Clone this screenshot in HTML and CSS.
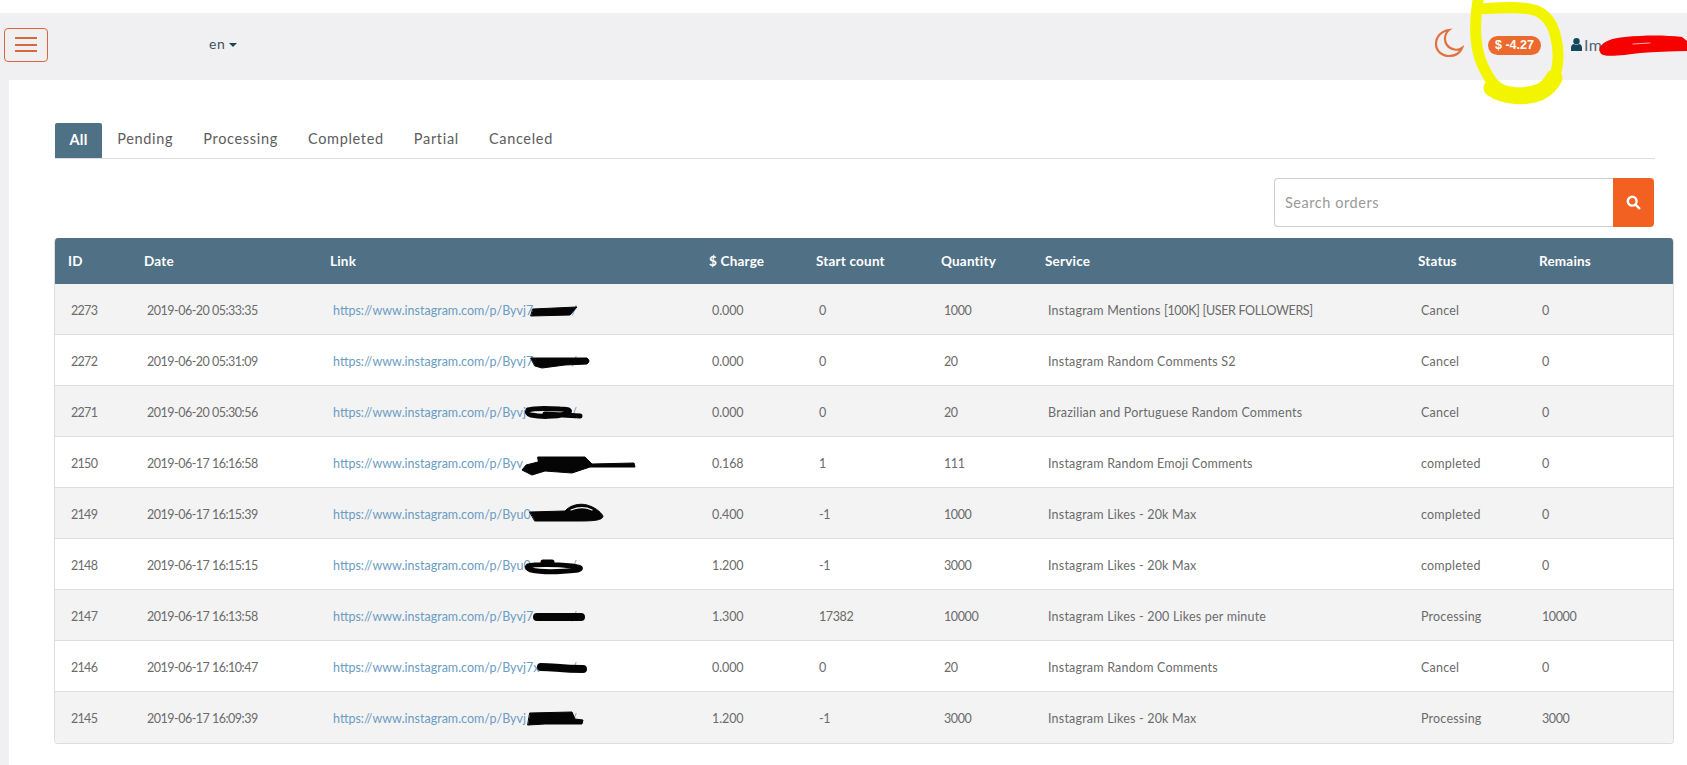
FILE: index.html
```html
<!DOCTYPE html>
<html>
<head>
  <title>Orders</title>
  <link rel="stylesheet" href="styles.css">
</head>
<body>
  <header class="topbar">
    <button class="menu-btn"><span></span><span></span><span></span></button>
    <div class="lang">en<i class="caret"></i></div>
    <div class="top-right">
      <svg class="moon" width="30" height="30" viewBox="0 0 30 30">
        <path d="M15 2 C7 3 2 9 2 16 C2 23 8 28 15 28 C21 28 26 25 28 20 C26 21.5 23 22 20.5 21.5 C14 20.5 10.5 15 11 10 C11.3 6.5 12.5 4 15 2 Z"></path>
      </svg>
      <span class="balance">$ -4.27</span>
      <div class="user">
        <svg width="11" height="13" viewBox="0 0 11 13">
          <circle cx="5.5" cy="3.3" r="3.2"></circle>
          <path d="M0 13 V9.5 C0 7.5 1.5 6.2 3 6 C4.5 7.2 6.5 7.2 8 6 C9.5 6.2 11 7.5 11 9.5 V13 Z"></path>
        </svg>
        <span>Im</span>
      </div>
    </div>
  </header>

  <main class="content">
    <ul class="tabs">
      <li class="active">All</li>
      <li>Pending</li>
      <li>Processing</li>
      <li>Completed</li>
      <li>Partial</li>
      <li>Canceled</li>
    </ul>

    <div class="search">
      <input type="text" placeholder="Search orders">
      <button>
        <svg width="15" height="15" viewBox="0 0 15 15">
          <circle cx="6.2" cy="6.2" r="4.4"></circle>
          <path d="M9.6 9.6 L13.3 13.3"></path>
        </svg>
      </button>
    </div>

    <div class="orders">
      <table>
        <colgroup>
          <col class="c-id"><col class="c-date"><col class="c-link"><col class="c-charge"><col class="c-start"><col class="c-qty"><col class="c-service"><col class="c-status"><col class="c-remains">
        </colgroup>
        <thead>
          <tr><th>ID</th><th>Date</th><th>Link</th><th>$ Charge</th><th>Start count</th><th>Quantity</th><th>Service</th><th>Status</th><th>Remains</th></tr>
        </thead>
        <tbody>
          <tr><td>2273</td><td>2019-06-20 05:33:35</td><td><a href="#"><span>https://www.instagram.com/p/Byvj7</span><span>/</span></a></td><td>0.000</td><td>0</td><td>1000</td><td>Instagram Mentions <span class="caps">[100K] [USER FOLLOWERS]</span></td><td>Cancel</td><td>0</td></tr>
          <tr><td>2272</td><td>2019-06-20 05:31:09</td><td><a href="#"><span>https://www.instagram.com/p/Byvj7</span><span>/</span></a></td><td>0.000</td><td>0</td><td>20</td><td>Instagram Random Comments S2</td><td>Cancel</td><td>0</td></tr>
          <tr><td>2271</td><td>2019-06-20 05:30:56</td><td><a href="#"><span>https://www.instagram.com/p/Byvj</span><span>/</span></a></td><td>0.000</td><td>0</td><td>20</td><td>Brazilian and Portuguese Random Comments</td><td>Cancel</td><td>0</td></tr>
          <tr><td>2150</td><td>2019-06-17 16:16:58</td><td><a href="#"><span>https://www.instagram.com/p/Byv</span><span>/</span></a></td><td>0.168</td><td>1</td><td>111</td><td>Instagram Random Emoji Comments</td><td>completed</td><td>0</td></tr>
          <tr><td>2149</td><td>2019-06-17 16:15:39</td><td><a href="#"><span>https://www.instagram.com/p/Byu0</span><span>/</span></a></td><td>0.400</td><td>-1</td><td>1000</td><td>Instagram Likes - 20k Max</td><td>completed</td><td>0</td></tr>
          <tr><td>2148</td><td>2019-06-17 16:15:15</td><td><a href="#"><span>https://www.instagram.com/p/Byu0</span><span>/</span></a></td><td>1.200</td><td>-1</td><td>3000</td><td>Instagram Likes - 20k Max</td><td>completed</td><td>0</td></tr>
          <tr><td>2147</td><td>2019-06-17 16:13:58</td><td><a href="#"><span>https://www.instagram.com/p/Byvj7</span><span>/</span></a></td><td>1.300</td><td>17382</td><td>10000</td><td>Instagram Likes - 200 Likes per minute</td><td>Processing</td><td>10000</td></tr>
          <tr><td>2146</td><td>2019-06-17 16:10:47</td><td><a href="#"><span>https://www.instagram.com/p/Byvj7x</span><span>/</span></a></td><td>0.000</td><td>0</td><td>20</td><td>Instagram Random Comments</td><td>Cancel</td><td>0</td></tr>
          <tr><td>2145</td><td>2019-06-17 16:09:39</td><td><a href="#"><span>https://www.instagram.com/p/Byvj</span><span>/</span></a></td><td>1.200</td><td>-1</td><td>3000</td><td>Instagram Likes - 20k Max</td><td>Processing</td><td>3000</td></tr>
        </tbody>
      </table>
    </div>
  </main>

  <!-- marker scribbles drawn over the screenshot -->
  <svg class="scribbles" width="1687" height="765" viewBox="0 0 1687 765">
    <path class="yellow" d="M1478 0 C1476 12 1475 25 1476 38 C1477 52 1481 64 1487 74 C1494 88 1505 94 1518 94 C1532 94 1548 88 1554 78 C1559 66 1559 50 1556 38 C1553 24 1547 14 1534 10 C1520 6 1498 8 1480 9"></path>
    <path class="yellow thick" d="M1492 88 C1505 97 1525 98 1540 92 C1548 88 1551 84 1554 78"></path>
    <path class="red" d="M1600 47 C1604 41 1612 38 1625 37 C1645 35 1665 35 1682 37 L1687 41 V51 C1670 51 1655 52 1640 53 C1625 55 1610 57 1603 55 C1599 53 1599 49 1600 47 Z"></path>
    <path class="red-gap" d="M1633 44 L1650 43"></path>

    <path class="ink fill" d="M533 309 L577 307 L570 315 L531 316 Z"></path>
    <path class="ink fill" d="M531 358 L560 358 L587 358 Q591 361 587 364 L565 365 L542 368 L535 366 Z"></path>
    <path class="ink w5" d="M528 410 C534 408 545 408 560 409 C570 409 572 411 566 414 C555 417 540 417 531 415 C527 414 527 412 528 410 M545 414 L580 416"></path>
    <path class="ink fill" d="M538 457 L585 457 L592 464 L634 463 L635 467 L590 467 L572 473 L545 471 L532 475 L522 470 L526 465 L538 462 Z"></path>
    <path class="ink fill" d="M530 512 L565 511 C570 505 580 503 587 505 C594 507 600 511 603 516 C603 520 595 521 580 521 L535 521 Z"></path>
    <path class="sliver" d="M571 510 C578 507 586 507 592 510"></path>
    <path class="ink w5" d="M528 566 C535 564 555 564 572 566 C580 567 583 568 578 570 C560 572 540 572 531 570 C527 569 527 567 528 566 Z M543 562 L552 562"></path>
    <path class="ink w7" d="M537 617 L581 617"></path>
    <path class="ink w7" d="M541 667 C555 667 560 669 583 669"></path>
    <path class="ink fill" d="M530 713 L572 712 L575 719 L583 720 L582 724 L545 724 L528 725 Z"></path>
  </svg>
</body>
</html>
```

FILE: styles.css
```css
body {
    margin: 0;
    padding-top: 13px;
    background-color: #f0f0f3;
    background-image: linear-gradient(#fff, #fff);
    background-size: 100% 13px;
    background-repeat: no-repeat;
    font-family: Lato, "Open Sans", sans-serif;
    color: #6b6b6b;
    overflow: hidden;
}
.topbar {
    display: flex;
    align-items: center;
    height: 67px;
    padding-left: 4px;
}
.menu-btn {
    display: flex;
    flex-direction: column;
    justify-content: center;
    gap: 4.5px;
    width: 44px;
    height: 34px;
    padding: 0 10px;
    margin-top: -4px;
    background: none;
    border: 1px solid #d8683c;
    border-radius: 4px;
}
.menu-btn span {
    display: block;
    height: 2px;
    background-color: #d8683c;
}
.lang {
    margin-left: 161px;
    margin-top: -7px;
    font-size: 14px;
    letter-spacing: 0.5px;
    color: #3d5561;
}
.caret {
    display: inline-block;
    margin-left: 4px;
    vertical-align: 2px;
    border-left: 4px solid transparent;
    border-right: 4px solid transparent;
    border-top: 4px solid #1f4354;
}
.top-right {
    display: flex;
    align-items: center;
    margin-left: auto;
    margin-top: -5px;
}
.moon {
    margin-top: -2px;
    fill: none;
    stroke: #e2703f;
    stroke-width: 2.2;
}
.balance {
    margin-left: 24px;
    margin-top: 2px;
    width: 53px;
    height: 19px;
    line-height: 19px;
    text-align: center;
    border-radius: 10px;
    background-color: #ed6a2e;
    color: #fff;
    font-family: "Liberation Sans", sans-serif;
    font-size: 12.5px;
    font-weight: bold;
}
.user {
    display: flex;
    align-items: center;
    gap: 2px;
    width: 116px;
    margin-left: 30px;
    font-size: 16px;
    letter-spacing: 0.4px;
    color: #4b6674;
}
.user svg {
    fill: #12485c;
}
.content {
    box-sizing: border-box;
    height: 685px;
    margin-left: 9px;
    padding: 43px 32px 0 46px;
    background-color: #fff;
}
.tabs {
    display: flex;
    margin: 0;
    padding: 0;
    list-style: none;
    border-bottom: 1px solid #ddd;
    font-size: 14.5px;
    letter-spacing: 0.68px;
}
.tabs li {
    height: 35px;
    line-height: 31px;
    padding: 0 15px;
    color: #5c5c5c;
}
.tabs li.active {
    padding: 0 14.5px;
    line-height: 33px;
    border-radius: 2px 2px 0 0;
    background-color: #4f7186;
    color: #fff;
    font-weight: bold;
    letter-spacing: 0.3px;
}
.search {
    display: flex;
    width: 380px;
    height: 49px;
    margin: 19px 1px 11px auto;
}
.search input {
    flex: 1;
    min-width: 0;
    padding: 0 10px;
    border: 1px solid #ccc;
    border-right: none;
    border-radius: 4px 0 0 4px;
    font-family: inherit;
    font-size: 14.5px;
    letter-spacing: 0.55px;
    outline: none;
}
.search input::placeholder {
    color: #999;
}
.search button {
    width: 41px;
    padding: 0;
    border: none;
    border-radius: 0 4px 4px 0;
    background-color: #f26122;
}
.search svg {
    display: block;
    margin: 0 auto;
    fill: none;
    stroke: #fff;
    stroke-width: 2.4;
    stroke-linecap: round;
}
.orders {
    width: 1620px;
    margin-left: -1px;
    box-sizing: border-box;
    border: 1px solid #ddd;
    border-top: none;
    border-radius: 4px;
    overflow: hidden;
}
table {
    width: 1618px;
    table-layout: fixed;
    border-collapse: collapse;
}
.c-id { width: 75px; }
.c-date { width: 186px; }
.c-link { width: 379px; }
.c-charge { width: 107px; }
.c-start { width: 125px; }
.c-qty { width: 104px; }
.c-service { width: 373px; }
.c-status { width: 121px; }
.c-remains { width: 148px; }
th {
    height: 46px;
    padding: 0 0 0 14px;
    text-align: left;
    background-color: #507086;
    color: #fff;
    font-size: 13.5px;
    font-weight: bold;
    letter-spacing: 0.2px;
}
th:first-child {
    padding-left: 13px;
}
td {
    height: 48px;
    padding: 2px 0 0 17px;
    border-bottom: 1px solid #ddd;
    font-size: 12.5px;
    letter-spacing: 0.2px;
    white-space: nowrap;
}
td:first-child {
    padding-left: 16px;
    letter-spacing: -0.7px;
}
td:nth-child(2) {
    letter-spacing: -0.5px;
}
td:nth-child(4) {
    letter-spacing: -0.1px;
}
td:nth-child(5),
td:nth-child(6),
td:nth-child(9) {
    letter-spacing: -0.4px;
}
tbody tr:nth-child(odd) {
    background-color: #f3f3f4;
}
tbody tr:last-child td {
    height: 49px;
    border-bottom: none;
}
td a {
    display: inline-flex;
    justify-content: space-between;
    width: 244px;
    color: #6b9cc2;
    text-decoration: none;
    letter-spacing: 0;
}
.caps {
    letter-spacing: -0.35px;
}
.scribbles {
    position: absolute;
    top: 0;
    left: 0;
    fill: none;
    stroke-linecap: round;
    stroke-linejoin: round;
}
.yellow {
    stroke: #f3f500;
    stroke-width: 11;
}
.yellow.thick {
    stroke-width: 17;
}
.red {
    fill: #f60000;
}
.red-gap {
    stroke: #f7b0b0;
    stroke-width: 1;
}
.ink {
    stroke: #050505;
}
.ink.fill {
    fill: #050505;
    stroke-width: 1;
}
.ink.w5 {
    stroke-width: 5;
}
.ink.w7 {
    stroke-width: 8;
}
.sliver {
    stroke: #f3f3f4;
    stroke-width: 1.2;
}
```
